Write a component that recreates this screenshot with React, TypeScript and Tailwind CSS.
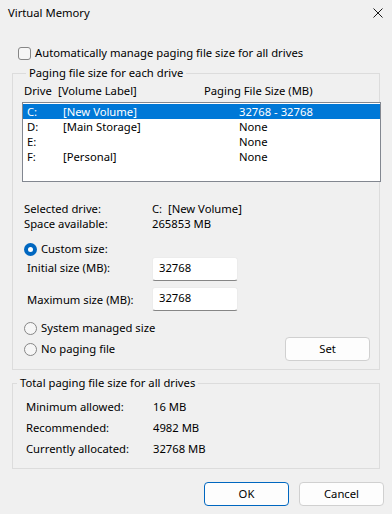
import React from "react";

const font = { fontFamily: '"Noto Sans", "Segoe UI", sans-serif' };

function Radio({ checked }: { checked?: boolean }) {
  if (checked) {
    return (
      <span className="w-[13px] h-[13px] rounded-full bg-[#0067c0] flex items-center justify-center shrink-0">
        <span className="w-[5px] h-[5px] rounded-full bg-white" />
      </span>
    );
  }
  return <span className="w-[13px] h-[13px] rounded-full border border-[#868686] bg-[#f6f6f6] shrink-0" />;
}

const rows = [
  { d: "C:", l: "[New Volume]", s: "32768 - 32768", sel: true },
  { d: "D:", l: "[Main Storage]", s: "None" },
  { d: "E:", l: "", s: "None" },
  { d: "F:", l: "[Personal]", s: "None" },
];

const inputCls =
  "w-[86px] h-[24px] bg-white border-b border-b-[#868686] border-x border-x-[#ececec] border-t border-t-[#ececec] rounded-[3px] flex items-center pl-[6px] pb-[2px]";

export default function App() {
  return (
    <div className="w-[392px] h-[514px] bg-[#f0f0f0] text-[11.25px] leading-[16px] text-black overflow-hidden" style={font}>
      {/* title bar */}
      <div className="h-[26px] flex items-center justify-between pl-[8px] pr-[9px]">
        <span>Virtual Memory</span>
        <svg width="10" height="10" viewBox="0 0 10 10">
          <path d="M0.5 0.5 L9.5 9.5 M9.5 0.5 L0.5 9.5" stroke="#1a1a1a" strokeWidth="1" />
        </svg>
      </div>

      {/* auto checkbox */}
      <div className="mt-[19px] h-[16px] flex items-center pl-[18px]">
        <span className="w-[13px] h-[13px] rounded-[3px] border border-[#868686] bg-[#f6f6f6] shrink-0" />
        <span className="ml-[4px]">Automatically manage paging file size for all drives</span>
      </div>

      {/* group 1 */}
      <fieldset className="mt-[4px] ml-[12px] w-[368px] min-w-0 border border-[#dcdcdc] pl-[9px] pr-[9px] pb-[8px]">
        <legend className="ml-[4px] px-[3px] h-[16px] leading-[16px]">Paging file size for each drive</legend>
        <div className="mt-[2px] h-[16px] flex items-center pl-[2px]">
          <span className="w-[34px]">Drive</span>
          <span className="w-[146px]">[Volume Label]</span>
          <span>Paging File Size (MB)</span>
        </div>
        <div className="mt-[3px] w-[359px] h-[80px] border border-[#828790] bg-white pt-[1px]">
          {rows.map((r) => (
            <div
              key={r.d}
              className={
                "h-[15px] flex items-center pl-[4px] leading-[15px] " +
                (r.sel ? "bg-[#0078d7] text-white" : "text-black")
              }
            >
              <span className="w-[36px]">{r.d}</span>
              <span className="w-[176px]">{r.l}</span>
              <span>{r.s}</span>
            </div>
          ))}
        </div>

        <div className="mt-[19px] pl-[2px]">
          <div className="h-[15px] flex items-center">
            <span className="w-[128px]">Selected drive:</span>
            <span>C:&nbsp;&nbsp;[New Volume]</span>
          </div>
          <div className="h-[15px] flex items-center">
            <span className="w-[128px]">Space available:</span>
            <span>265853 MB</span>
          </div>
        </div>

        <div className="mt-[10px] h-[16px] flex items-center pl-[2px]">
          <Radio checked />
          <span className="ml-[4px]">Custom size:</span>
        </div>
        <div className="h-[24px] flex items-center">
          <span className="pl-[5px] w-[130px] pb-[3px]">Initial size (MB):</span>
          <div className={inputCls}>32768</div>
        </div>
        <div className="mt-[6px] h-[24px] flex items-center">
          <span className="pl-[5px] w-[130px] pt-[2px]">Maximum size (MB):</span>
          <div className={inputCls}>32768</div>
        </div>

        <div className="mt-[9px] h-[16px] flex items-center pl-[2px]">
          <Radio />
          <span className="ml-[4px]">System managed size</span>
        </div>
        <div className="mt-[1px] h-[24px] flex items-center justify-between pl-[2px]">
          <div className="flex items-center">
            <Radio />
            <span className="ml-[4px]">No paging file</span>
          </div>
          <div className="w-[85px] h-[24px] rounded-[4px] border border-[#d0d0d0] bg-[#fdfdfd] flex items-center justify-center">
            Set
          </div>
        </div>
      </fieldset>

      {/* group 2 */}
      <fieldset className="mt-[5px] ml-[12px] w-[368px] min-w-0 border border-[#dcdcdc] pl-[13px] pb-[9px]">
        <legend className="ml-[-9px] px-[3px] h-[16px] leading-[16px]">Total paging file size for all drives</legend>
        <div className="mt-[5px]">
          <div className="h-[21px] flex items-center">
            <span className="w-[127px]">Minimum allowed:</span>
            <span>16 MB</span>
          </div>
          <div className="h-[21px] flex items-center">
            <span className="w-[127px]">Recommended:</span>
            <span>4982 MB</span>
          </div>
          <div className="h-[21px] flex items-center">
            <span className="w-[127px]">Currently allocated:</span>
            <span>32768 MB</span>
          </div>
        </div>
      </fieldset>

      <div className="mt-[13px] flex justify-end gap-[10px] pr-[8px]">
        <div className="w-[85px] h-[24px] rounded-[4px] border border-[#0067c0] bg-[#fdfdfd] flex items-center justify-center">
          OK
        </div>
        <div className="w-[85px] h-[24px] rounded-[4px] border border-[#d0d0d0] bg-[#fdfdfd] flex items-center justify-center">
          Cancel
        </div>
      </div>
    </div>
  );
}
